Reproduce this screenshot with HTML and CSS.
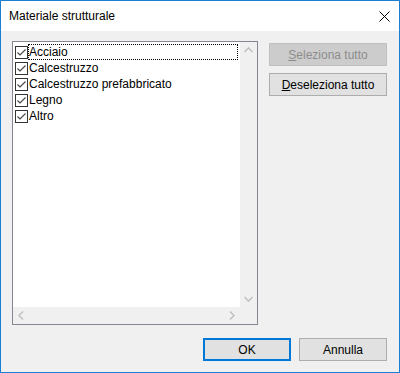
FILE: index.html
```html
<!DOCTYPE html>
<html lang="it">
<head>
<meta charset="utf-8">
<title>Materiale strutturale</title>
<link rel="stylesheet" href="styles.css">
</head>
<body>
<div class="window">
  <div class="titlebar">
    <span class="title">Materiale strutturale</span>
    <svg class="close" width="11" height="11" viewBox="0 0 11 11"><path d="M0.5 0.5 L10.5 10.5 M10.5 0.5 L0.5 10.5" stroke="#000" stroke-width="1" fill="none"/></svg>
  </div>
  <div class="content">
    <div class="main">
      <div class="listbox">
        <div class="items">
          <div class="row"><span class="cb"><svg width="13" height="13" viewBox="0 0 13 13"><rect x="0.5" y="0.5" width="12" height="12" fill="#fff" stroke="#333"/><path d="M2.5 6.5 L5 9 L10.5 3.5" stroke="#444" stroke-width="1.1" fill="none"/></svg></span><span class="label focus">Acciaio</span></div>
          <div class="row"><span class="cb"><svg width="13" height="13" viewBox="0 0 13 13"><rect x="0.5" y="0.5" width="12" height="12" fill="#fff" stroke="#333"/><path d="M2.5 6.5 L5 9 L10.5 3.5" stroke="#444" stroke-width="1.1" fill="none"/></svg></span><span class="label">Calcestruzzo</span></div>
          <div class="row"><span class="cb"><svg width="13" height="13" viewBox="0 0 13 13"><rect x="0.5" y="0.5" width="12" height="12" fill="#fff" stroke="#333"/><path d="M2.5 6.5 L5 9 L10.5 3.5" stroke="#444" stroke-width="1.1" fill="none"/></svg></span><span class="label">Calcestruzzo prefabbricato</span></div>
          <div class="row"><span class="cb"><svg width="13" height="13" viewBox="0 0 13 13"><rect x="0.5" y="0.5" width="12" height="12" fill="#fff" stroke="#333"/><path d="M2.5 6.5 L5 9 L10.5 3.5" stroke="#444" stroke-width="1.1" fill="none"/></svg></span><span class="label">Legno</span></div>
          <div class="row"><span class="cb"><svg width="13" height="13" viewBox="0 0 13 13"><rect x="0.5" y="0.5" width="12" height="12" fill="#fff" stroke="#333"/><path d="M2.5 6.5 L5 9 L10.5 3.5" stroke="#444" stroke-width="1.1" fill="none"/></svg></span><span class="label">Altro</span></div>
        </div>
        <div class="vscroll">
          <svg class="arrow" width="17" height="17" viewBox="0 0 17 17"><path d="M4.5 10 L8.5 6 L12.5 10" stroke="#c2c2c2" stroke-width="1.6" fill="none"/></svg>
          <svg class="arrow" width="17" height="17" viewBox="0 0 17 17"><path d="M4.5 7 L8.5 11 L12.5 7" stroke="#c2c2c2" stroke-width="1.6" fill="none"/></svg>
        </div>
        <div class="hscroll">
          <svg class="arrow" width="17" height="17" viewBox="0 0 17 17"><path d="M10 4.5 L6 8.5 L10 12.5" stroke="#c2c2c2" stroke-width="1.6" fill="none"/></svg>
          <svg class="arrow" width="17" height="17" viewBox="0 0 17 17"><path d="M7 4.5 L11 8.5 L7 12.5" stroke="#c2c2c2" stroke-width="1.6" fill="none"/></svg>
        </div>
        <div class="corner"></div>
      </div>
      <div class="side">
        <button class="btn wide disabled"><u>S</u>eleziona tutto</button>
        <button class="btn wide"><u>D</u>eseleziona tutto</button>
      </div>
    </div>
    <div class="footer">
      <button class="btn default">OK</button>
      <button class="btn">Annulla</button>
    </div>
  </div>
</div>
</body>
</html>
```

FILE: styles.css
```css
html, body {
  margin: 0;
  padding: 0;
  background: #ffffff;
}

body {
  font-family: "Liberation Sans", Arial, sans-serif;
  font-size: 12px;
  color: #000;
}

.window {
  width: 400px;
  height: 373px;
  box-sizing: border-box;
  border: 1px solid #1a7fd4;
  display: flex;
  flex-direction: column;
  background: #f0f0f0;
}

.titlebar {
  height: 30px;
  flex: 0 0 30px;
  background: #ffffff;
  display: flex;
  align-items: center;
  padding-left: 8px;
}

.title {
  flex: 1;
  line-height: 14px;
}

.close {
  margin-right: 9px;
  display: block;
}

.content {
  flex: 1;
  display: flex;
  flex-direction: column;
  padding: 10px 12px 11px 11px;
}

.main {
  display: flex;
  gap: 11px;
}

.listbox {
  width: 246px;
  height: 284px;
  box-sizing: border-box;
  border: 1px solid #828790;
  background: #ffffff;
  display: grid;
  grid-template-columns: 1fr 17px;
  grid-template-rows: 1fr 17px;
}

.items {
  padding: 2px 2px 0 2px;
  display: flex;
  flex-direction: column;
}

.row {
  height: 16px;
  display: flex;
  align-items: center;
}

.cb {
  width: 13px;
  height: 13px;
  display: block;
}

.cb svg {
  display: block;
}

.label {
  flex: 1;
  height: 16px;
  box-sizing: border-box;
  line-height: 14px;
  padding: 0 2px 0 0;
  border: 1px solid transparent;
  white-space: nowrap;
}

.label.focus {
  border: 1px dotted #000;
}

.vscroll, .hscroll, .corner {
  background: #f0f0f0;
}

.vscroll {
  display: flex;
  flex-direction: column;
  justify-content: space-between;
}

.hscroll {
  display: flex;
  justify-content: space-between;
}

.arrow {
  display: block;
}

.side {
  display: flex;
  flex-direction: column;
  gap: 7px;
  padding-top: 2px;
}

.btn {
  font-family: "Liberation Sans", Arial, sans-serif;
  font-size: 12px;
  color: #000;
  background: #e1e1e1;
  border: 1px solid #adadad;
  height: 23px;
  width: 88px;
  padding: 0;
  margin: 0;
  box-sizing: border-box;
  line-height: 14px;
}

.btn.wide {
  width: 118px;
}

.btn.disabled {
  background: #cccccc;
  border-color: #bfbfbf;
  color: #8c8c8c;
}

.btn.default {
  border: 2px solid #0078d7;
}

.footer {
  margin-top: 13px;
  display: flex;
  justify-content: flex-end;
  gap: 8px;
}
```
